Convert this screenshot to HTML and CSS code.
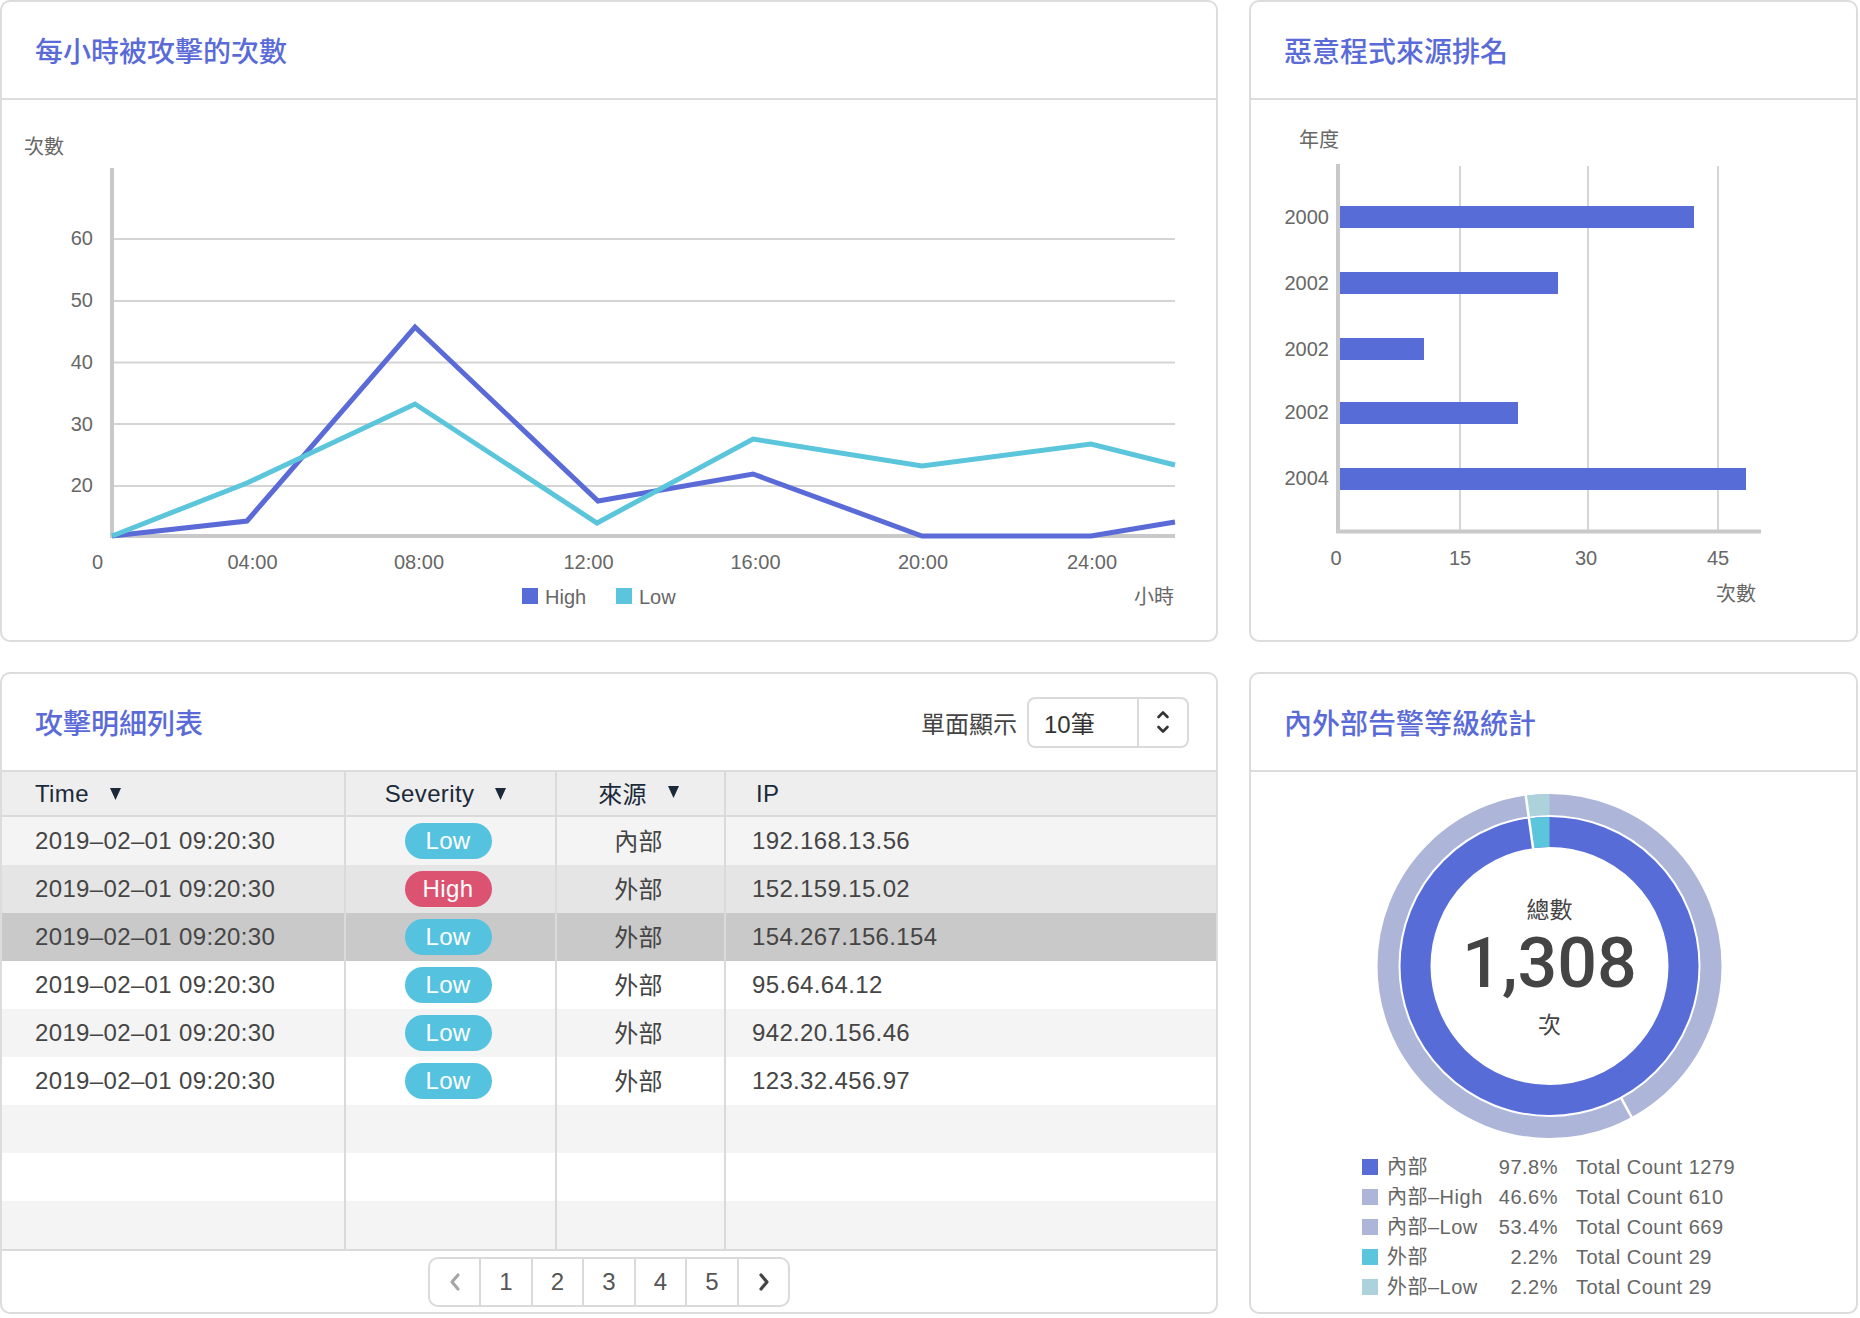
FILE: index.html
```html
<!DOCTYPE html>
<html lang="zh-Hant">
<head>
<meta charset="utf-8">
<title>Dashboard</title>
<link rel="stylesheet" href="styles.css">
</head>
<body>
<div class="dashboard">

  <section class="card">
    <header class="card-head"><h2 class="card-title">每小時被攻擊的次數</h2></header>
    <div class="card-body">
      <svg class="chart" viewBox="2 100 1214 540" width="1214" height="540">
        <text class="ax" x="24" y="147">次數</text>
        <g class="grid">
          <line x1="113" y1="239" x2="1175" y2="239"/>
          <line x1="113" y1="301" x2="1175" y2="301"/>
          <line x1="113" y1="362.5" x2="1175" y2="362.5"/>
          <line x1="113" y1="424" x2="1175" y2="424"/>
          <line x1="113" y1="486" x2="1175" y2="486"/>
        </g>
        <line class="axis" x1="112" y1="168" x2="112" y2="538"/>
        <line class="axis" x1="110" y1="536" x2="1175" y2="536"/>
        <g class="ax ax-end">
          <text x="93" y="237.5">60</text>
          <text x="93" y="299.5">50</text>
          <text x="93" y="362">40</text>
          <text x="93" y="423.5">30</text>
          <text x="93" y="485">20</text>
        </g>
        <polyline class="line-high" points="112,536 247,521 415,327 598,501 753,474 922,536 1091,536 1175,522"/>
        <polyline class="line-low" points="112,536 247,483 415,404 597,523 753,439 922,466 1091,444 1175,465"/>
        <g class="ax ax-mid">
          <text x="97.5" y="562">0</text>
          <text x="252.5" y="562">04:00</text>
          <text x="419" y="562">08:00</text>
          <text x="588.5" y="562">12:00</text>
          <text x="755.5" y="562">16:00</text>
          <text x="923" y="562">20:00</text>
          <text x="1092" y="562">24:00</text>
        </g>
        <rect class="fill-high" x="522" y="588" width="16" height="16"/>
        <text class="ax" x="545" y="597">High</text>
        <rect class="fill-low" x="616" y="588" width="16" height="16"/>
        <text class="ax" x="639" y="597">Low</text>
        <text class="ax ax-end" x="1174" y="597">小時</text>
      </svg>
    </div>
  </section>

  <section class="card">
    <header class="card-head"><h2 class="card-title">惡意程式來源排名</h2></header>
    <div class="card-body">
      <svg class="chart" viewBox="1251 100 605 540" width="605" height="540">
        <text class="ax" x="1299" y="140">年度</text>
        <g class="grid">
          <line x1="1460" y1="166" x2="1460" y2="530"/>
          <line x1="1588" y1="166" x2="1588" y2="530"/>
          <line x1="1718" y1="166" x2="1718" y2="530"/>
        </g>
        <g class="fill-high">
          <rect x="1339" y="206" width="355" height="22"/>
          <rect x="1339" y="272" width="219" height="22"/>
          <rect x="1339" y="338" width="85" height="22"/>
          <rect x="1339" y="402" width="179" height="22"/>
          <rect x="1339" y="468" width="407" height="22"/>
        </g>
        <line class="axis" x1="1338" y1="164" x2="1338" y2="533"/>
        <line class="axis" x1="1336" y1="531.5" x2="1761" y2="531.5"/>
        <g class="ax ax-end">
          <text x="1329" y="216.5">2000</text>
          <text x="1329" y="282.5">2002</text>
          <text x="1329" y="349">2002</text>
          <text x="1329" y="412">2002</text>
          <text x="1329" y="477.5">2004</text>
        </g>
        <g class="ax ax-mid">
          <text x="1336" y="557.5">0</text>
          <text x="1460" y="557.5">15</text>
          <text x="1586" y="557.5">30</text>
          <text x="1718" y="557.5">45</text>
        </g>
        <text class="ax ax-end" x="1756" y="593.5">次數</text>
      </svg>
    </div>
  </section>

  <section class="card">
    <header class="card-head">
      <h2 class="card-title">攻擊明細列表</h2>
      <div class="page-size">
        <span class="page-size-label">單面顯示</span>
        <div class="select">
          <span class="select-val">10筆</span>
          <span class="select-arrows">
            <svg width="14" height="30" viewBox="0 0 14 30"><polyline class="chev" points="2.5,10 7,5.5 11.5,10"/><polyline class="chev" points="2.5,20 7,24.5 11.5,20"/></svg>
          </span>
        </div>
      </div>
    </header>
    <div class="table">
      <div class="row head">
        <div class="cell c-time">Time<svg class="sort" width="11" height="12" viewBox="0 0 11 12"><polygon points="0,0 11,0 5.5,12"/></svg></div>
        <div class="cell c-sev c-sev-head">Severity<svg class="sort" width="11" height="12" viewBox="0 0 11 12"><polygon points="0,0 11,0 5.5,12"/></svg></div>
        <div class="cell c-src">來源<svg class="sort" width="11" height="12" viewBox="0 0 11 12"><polygon points="0,0 11,0 5.5,12"/></svg></div>
        <div class="cell c-ip c-ip-head">IP</div>
      </div>
      <div class="row odd">
        <div class="cell c-time">2019–02–01 09:20:30</div>
        <div class="cell c-sev"><span class="badge low">Low</span></div>
        <div class="cell c-src">內部</div>
        <div class="cell c-ip">192.168.13.56</div>
      </div>
      <div class="row hover">
        <div class="cell c-time">2019–02–01 09:20:30</div>
        <div class="cell c-sev"><span class="badge high">High</span></div>
        <div class="cell c-src">外部</div>
        <div class="cell c-ip">152.159.15.02</div>
      </div>
      <div class="row selected">
        <div class="cell c-time">2019–02–01 09:20:30</div>
        <div class="cell c-sev"><span class="badge low">Low</span></div>
        <div class="cell c-src">外部</div>
        <div class="cell c-ip">154.267.156.154</div>
      </div>
      <div class="row">
        <div class="cell c-time">2019–02–01 09:20:30</div>
        <div class="cell c-sev"><span class="badge low">Low</span></div>
        <div class="cell c-src">外部</div>
        <div class="cell c-ip">95.64.64.12</div>
      </div>
      <div class="row odd">
        <div class="cell c-time">2019–02–01 09:20:30</div>
        <div class="cell c-sev"><span class="badge low">Low</span></div>
        <div class="cell c-src">外部</div>
        <div class="cell c-ip">942.20.156.46</div>
      </div>
      <div class="row">
        <div class="cell c-time">2019–02–01 09:20:30</div>
        <div class="cell c-sev"><span class="badge low">Low</span></div>
        <div class="cell c-src">外部</div>
        <div class="cell c-ip">123.32.456.97</div>
      </div>
      <div class="row odd"><div class="cell"></div><div class="cell"></div><div class="cell"></div><div class="cell"></div></div>
      <div class="row"><div class="cell"></div><div class="cell"></div><div class="cell"></div><div class="cell"></div></div>
      <div class="row odd"><div class="cell"></div><div class="cell"></div><div class="cell"></div><div class="cell"></div></div>
      <div class="table-foot">
        <nav class="pager">
          <span class="pg"><svg width="12" height="20" viewBox="0 0 12 20"><polyline class="pg-chev off" points="9,3 3,10 9,17"/></svg></span>
          <span class="pg">1</span>
          <span class="pg">2</span>
          <span class="pg">3</span>
          <span class="pg">4</span>
          <span class="pg">5</span>
          <span class="pg"><svg width="12" height="20" viewBox="0 0 12 20"><polyline class="pg-chev" points="3,3 9,10 3,17"/></svg></span>
        </nav>
      </div>
    </div>
  </section>

  <section class="card">
    <header class="card-head"><h2 class="card-title">內外部告警等級統計</h2></header>
    <div class="card-body donut-body">
      <svg class="donut" viewBox="1251 772 605 378" width="605" height="378">
        <circle class="ring-outer" cx="1549.5" cy="966" r="161.5"/>
        <path class="seg-teal" d="M1527.3 806.0 A161.5 161.5 0 0 1 1549.5 804.5"/>
        <circle class="ring-inner" cx="1549.5" cy="966" r="134"/>
        <path class="seg-cyan" d="M1531.1 833.3 A134 134 0 0 1 1549.5 832"/>
        <line class="sep" x1="1533.2" y1="849" x2="1525.5" y2="794"/>
        <line class="sep" x1="1621.1" y1="1097.8" x2="1632.5" y2="1118.9"/>
        <text class="donut-cap" x="1549.5" y="910">總數</text>
        <text class="donut-num" x="1549.5" y="963">1,308</text>
        <text class="donut-cap" x="1549.5" y="1025">次</text>
      </svg>
      <div class="legend">
        <span class="sq c-in"></span><span class="lg-label">內部</span><span class="pct">97.8%</span><span class="tot">Total Count 1279</span>
        <span class="sq c-lav"></span><span class="lg-label">內部–High</span><span class="pct">46.6%</span><span class="tot">Total Count 610</span>
        <span class="sq c-lav"></span><span class="lg-label">內部–Low</span><span class="pct">53.4%</span><span class="tot">Total Count 669</span>
        <span class="sq c-out"></span><span class="lg-label">外部</span><span class="pct">2.2%</span><span class="tot">Total Count 29</span>
        <span class="sq c-outlow"></span><span class="lg-label">外部–Low</span><span class="pct">2.2%</span><span class="tot">Total Count 29</span>
      </div>
    </div>
  </section>

</div>
</body>
</html>
```

FILE: styles.css
```css
* { box-sizing: border-box; }

body {
  margin: 0;
  background: #ffffff;
  font-family: "Liberation Sans", "Noto Sans CJK TC", sans-serif;
  color: #444444;
}

.dashboard {
  display: grid;
  grid-template-columns: 1218px 609px;
  grid-template-rows: 642px 642px;
  column-gap: 31px;
  row-gap: 30px;
}

.card {
  border: 2px solid #dcdcdc;
  border-radius: 10px;
  overflow: hidden;
  display: flex;
  flex-direction: column;
  background: #ffffff;
}

.card-head {
  flex: none;
  height: 98px;
  border-bottom: 2px solid #dcdcdc;
  display: flex;
  align-items: center;
  justify-content: space-between;
  padding: 0 27px 0 33px;
}

.card-title {
  margin: 0;
  font-family: "Noto Sans CJK TC", sans-serif;
  font-size: 28px;
  font-weight: 500;
  color: #5a6bd8;
  line-height: 1;
}

.card-body {
  flex: 1;
  min-height: 0;
}

.chart { display: block; }

/* chart parts */
.grid line { stroke: #d5d5d5; stroke-width: 2; }
.axis { stroke: #c9c9c9; stroke-width: 4; }
.ax {
  font-family: "Liberation Sans", "Noto Sans CJK TC", sans-serif;
  font-size: 20px;
  fill: #676767;
  dominant-baseline: central;
}
.ax-end { text-anchor: end; }
.ax-mid { text-anchor: middle; }
.line-high { fill: none; stroke: #5a6bd8; stroke-width: 5; stroke-linejoin: miter; }
.line-low { fill: none; stroke: #5bc5dc; stroke-width: 5; stroke-linejoin: miter; }
.fill-high { fill: #586cd8; }
.fill-low { fill: #5bc5dc; }

/* page size select */
.page-size { display: flex; align-items: center; }
.page-size-label { font-size: 24px; color: #444; margin-right: 10px; }
.select {
  display: flex;
  width: 162px;
  height: 51px;
  border: 2px solid #dadada;
  border-radius: 8px;
}
.select-val {
  flex: 1;
  display: flex;
  align-items: center;
  padding-left: 15px;
  font-size: 24px;
  color: #333;
}
.select-arrows {
  width: 50px;
  border-left: 2px solid #dadada;
  display: flex;
  align-items: center;
  justify-content: center;
}
.chev { fill: none; stroke: #333; stroke-width: 2.6; stroke-linecap: round; stroke-linejoin: round; }

/* table */
.table {
  flex: 1;
  display: flex;
  flex-direction: column;
  min-height: 0;
}
.row {
  display: grid;
  grid-template-columns: 344px 211px 169px 1fr;
  height: 48px;
  flex: none;
  font-size: 24px;
  letter-spacing: 0.35px;
  color: #454545;
}
.cell {
  display: flex;
  align-items: center;
  border-right: 2px solid #dadada;
  white-space: nowrap;
}
.cell:last-child { border-right: none; }
.row.head {
  height: 45px;
  background: #eeeeee;
  border-bottom: 2px solid #dadada;
  color: #1b2a3a;
}
.row.odd { background: #f4f4f4; }
.row.hover { background: #e5e5e5; }
.row.selected { background: #c9c9c9; }

.c-time { padding-left: 33px; }
.c-sev { justify-content: center; padding-right: 5px; }
.c-sev-head { padding-right: 10px; }
.c-src { justify-content: center; padding: 0 4px 3px 0; }
.c-ip { padding-left: 26px; }
.c-ip-head { padding-left: 30px; }

.sort { margin-left: 21px; fill: #1b2a3a; }

.badge {
  width: 87px;
  height: 36px;
  border-radius: 18px;
  display: flex;
  align-items: center;
  justify-content: center;
  color: #ffffff;
  font-size: 24px;
}
.badge.low { background: #55c2df; }
.badge.high { background: #dc5371; }

.table-foot {
  flex: 1;
  border-top: 2px solid #dadada;
  display: flex;
  justify-content: center;
  align-items: flex-start;
  padding-top: 6px;
}
.pager {
  display: flex;
  height: 50px;
  border: 2px solid #dadada;
  border-radius: 10px;
  overflow: hidden;
}
.pg {
  width: 51.5px;
  display: flex;
  align-items: center;
  justify-content: center;
  border-left: 2px solid #dadada;
  font-size: 24px;
  color: #555;
}
.pg:first-child { border-left: none; width: 49.5px; }
.pg-chev { fill: none; stroke: #444; stroke-width: 3.2; stroke-linecap: round; stroke-linejoin: round; }
.pg-chev.off { stroke: #a6a6a6; }

/* donut */
.donut-body { display: flex; flex-direction: column; }
.donut { display: block; flex: none; }
.ring-outer { fill: none; stroke: #adb5d8; stroke-width: 21; }
.seg-teal { fill: none; stroke: #acd3dc; stroke-width: 21; }
.ring-inner { fill: none; stroke: #586cd8; stroke-width: 30; }
.seg-cyan { fill: none; stroke: #5bc5dc; stroke-width: 30; }
.sep { stroke: #ffffff; stroke-width: 2.5; }
.donut-cap {
  font-family: "Liberation Sans", "Noto Sans CJK TC", sans-serif;
  font-size: 23px;
  fill: #444;
  text-anchor: middle;
  dominant-baseline: central;
}
.donut-num {
  font-family: Roboto, "Liberation Sans", sans-serif;
  font-size: 70px;
  font-weight: 500;
  fill: #444;
  text-anchor: middle;
  dominant-baseline: central;
}

.legend {
  display: grid;
  grid-template-columns: 25px 100px 71px 1fr;
  grid-auto-rows: 30px;
  align-items: center;
  padding-left: 111px;
  margin-top: 2px;
  font-size: 20px;
  letter-spacing: 0.5px;
  color: #666;
  white-space: nowrap;
}
.lg-label { padding-bottom: 3px; }
.sq { width: 16px; height: 16px; }
.c-in { background: #586cd8; }
.c-lav { background: #adb5d8; }
.c-out { background: #5bc5dc; }
.c-outlow { background: #acd3dc; }
.pct { text-align: right; }
.tot { padding-left: 18px; }
```
